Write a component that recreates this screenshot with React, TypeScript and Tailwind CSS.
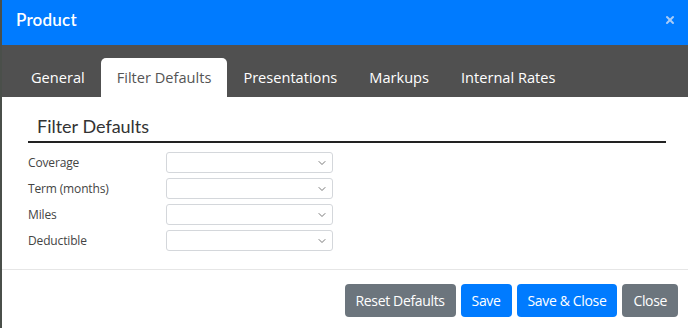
import { ChevronDown, X } from "lucide-react";

const tabs: string[] = ["General", "Filter Defaults", "Presentations", "Markups", "Internal Rates"];
const fields: string[] = ["Coverage", "Term (months)", "Miles", "Deductible"];
const buttons: { label: string; color: string }[] = [
   { label: "Reset Defaults", color: "bg-[#6c757d]" },
   { label: "Save", color: "bg-[#007bff]" },
   { label: "Save & Close", color: "bg-[#007bff]" },
   { label: "Close", color: "bg-[#6c757d]" },
];

function SelectBox(): JSX.Element {
   return (
      <div className="flex items-center justify-end w-[167px] h-[21px] border border-[#d4d7db] rounded-[3px] bg-white pr-[4px]">
         <ChevronDown size={12} strokeWidth={1.6} className="text-[#555]" />
      </div>
   );
}

export default function App(): JSX.Element {
   return (
      <div className="w-[688px] h-[328px] bg-white border-l-2 border-[#4a4f4a] flex flex-col font-['Open_Sans',sans-serif] overflow-hidden">
         {/* Header */}
         <div className="h-[45px] bg-[#007bff] flex items-center justify-between pl-[14px] pr-[12px] pb-[6px] shrink-0">
            <h1 className="text-white text-[17px] font-semibold font-['Lato',sans-serif] tracking-[0.2px]">Product</h1>
            <X size={12} strokeWidth={4} className="text-[#a9ccf6]" />
         </div>

         {/* Tabs */}
         <div className="h-[52px] bg-[#505050] flex items-end pl-[13px] shrink-0">
            {tabs.map((tab: string) => (
               tab === "Filter Defaults"
                  ? <div key={tab} className="h-[39px] px-[16px] flex items-center bg-white rounded-t-[5px] text-[#555] text-[14.6px]">{tab}</div>
                  : <div key={tab} className="h-[39px] px-[16px] flex items-center text-white text-[14.6px]">{tab}</div>
            ))}
         </div>

         {/* Body */}
         <div className="flex-1 pl-[26px] pr-[22px] pt-[17px]">
            <h2 className="pl-[9px] text-[18px] text-[#333] font-['Lato',sans-serif] leading-[24px] pb-[3px] border-b-2 border-[#222]">Filter Defaults</h2>
            <div className="flex flex-col gap-[5px] mt-[9px]">
               {fields.map((field: string) => (
                  <div key={field} className="flex items-center h-[21px]">
                     <label className="w-[138px] text-[12px] tracking-[-0.15px] text-[#444]">{field}</label>
                     <SelectBox />
                  </div>
               ))}
            </div>
         </div>

         {/* Footer */}
         <div className="h-[59px] border-t border-[#e6e6e6] flex items-start justify-end gap-[5px] pt-[14px] pr-[10px] shrink-0">
            {buttons.map((button) => (
               <button key={button.label} className={`h-[33px] px-[11px] rounded-[4px] ${button.color} text-white text-[14px] tracking-[-0.35px]`}>
                  {button.label}
               </button>
            ))}
         </div>
      </div>
   );
}
